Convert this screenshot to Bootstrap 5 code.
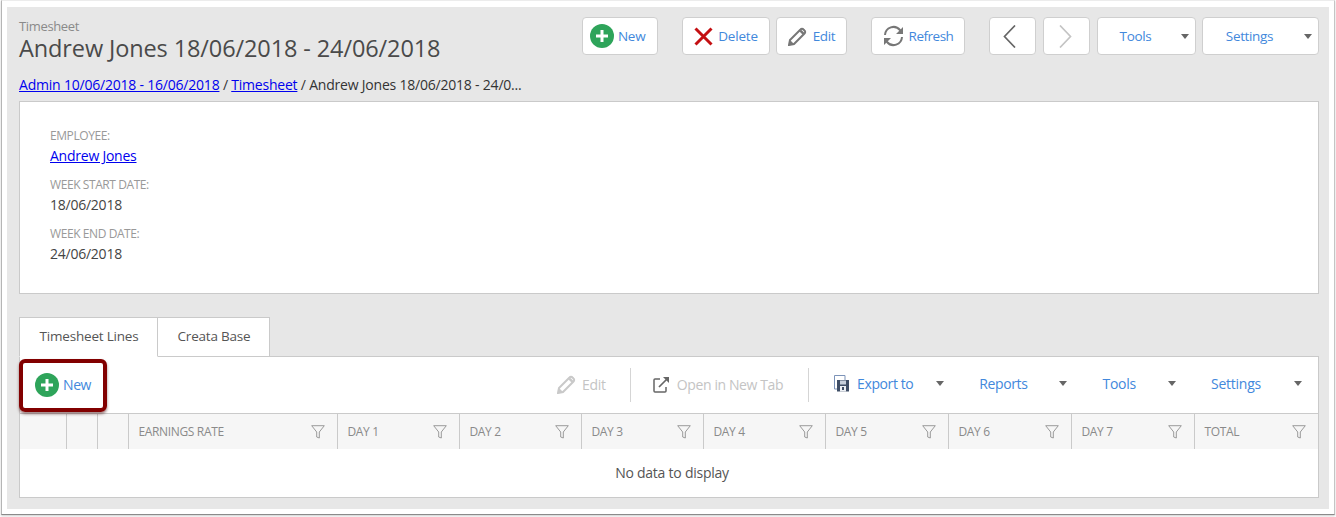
<!DOCTYPE html>
<html lang="en">
<head>
<meta charset="utf-8">
<title>Timesheet</title>
<link href="https://cdn.jsdelivr.net/npm/bootstrap@5.3.0/dist/css/bootstrap.min.css" rel="stylesheet">
<style>
html,body{height:517px;overflow:hidden;background:#fff;}
body{font-family:"Open Sans","Liberation Sans",sans-serif;font-size:14px;color:#444;letter-spacing:-.24px;}
.shot-frame{height:515px;margin:0 1px 0 1px;padding:6px 5px 5px 5px;border:1px solid #b5b5b5;border-top-color:#ececec;border-right-color:#c4c4c4;border-bottom-color:#8a8a8a;box-shadow:0 1px 2px rgba(0,0,0,.2);}
.panel-gray{background:#e7e7e7;height:502px;padding:10px 10px 0 12px;}
.head-row{height:59px;}
.crumb-type{font-size:13px;color:#8a8a8a;line-height:18px;letter-spacing:-.35px;}
.page-title{font-size:23.5px;font-weight:400;color:#4a4a4a;line-height:26px;margin:0;letter-spacing:-.11px;}
.tb-btn{height:38px;background:#fff;border:1px solid #cfcfcf;border-radius:4px;color:#4288dc;font-size:13.5px;padding:0;gap:6px;display:flex;align-items:center;justify-content:center;letter-spacing:-.35px;}
.tb-btn:hover{background:#fff;color:#4288dc;}
.w-new{width:76px;margin-right:24px;gap:4px;justify-content:flex-start;padding-left:7px;letter-spacing:-.3px;}
.w-del{width:88px;margin-right:6px;gap:5px;letter-spacing:-.2px;}
.w-edit{width:71px;margin-right:24px;}
.w-ref{width:94px;margin-right:24px;letter-spacing:-.5px;gap:5px;}
.w-nav{width:47px;margin-right:7px;}
.nav-prev{padding-right:7px;}
.nav-next{padding-right:3px;}
.w-tools{width:99px;margin-right:6px;}
.w-set{width:117px;}
.has-caret{position:relative;padding-right:22px;}
.caret-mark{width:0;height:0;border-left:4px solid transparent;border-right:4px solid transparent;border-top:5px solid #666;display:inline-block;}
.has-caret .caret-mark{position:absolute;right:6px;top:16px;}
.crumbs{line-height:18px;color:#333;height:25px;letter-spacing:-.21px;}
.crumbs a,.val-link{color:#0000ee;text-decoration:underline;}
.info-card{background:#fff;border:1px solid #cacaca;height:193px;padding:25px 30px;}
.fld-label{font-size:12px;color:#999;line-height:18px;text-transform:uppercase;letter-spacing:-.42px;}
.fld-value{line-height:20px;margin-top:1px;margin-bottom:10px;color:#444;}
.tab-strip{margin-top:23px;height:40px;position:relative;z-index:1;}
.tab-item{height:40px;background:#fff;border:1px solid #cacaca;color:#555;font-size:13.5px;letter-spacing:-.2px;padding:0 0 2px 1px;display:flex;align-items:center;justify-content:center;}
.tab-one{width:139px;border-bottom-color:#fff;}
.tab-two{width:112px;border-left:0;border-bottom-color:#cacaca;}
.grid-card{background:#fff;border:1px solid #cacaca;margin-top:-1px;height:142px;position:relative;}
.grid-bar{height:57px;border-bottom:1px solid #cacaca;padding:0 16px 1px 15px;position:relative;}
.bar-btn{color:#4288dc;display:flex;align-items:center;gap:4px;white-space:nowrap;}
.bar-btn.off{color:#c4c4c4;}
.bar-tight{letter-spacing:-.4px;}
.bar-drop{position:relative;top:-1px;}
.gap-six{gap:6px;}
.gap-seven{gap:7px;}
.bar-sep{width:1px;height:34px;background:#d5d5d5;}
.sep-a{margin:0 22px 0 24px;}
.sep-b{margin:0 25px;}
.bar-gap{margin-left:35px;}
.bar-gap .caret-mark{margin-left:28px;}
.bar-gap .caret-last{margin-left:29px;}
.export-caret{margin-left:16px;}
.grid-table{table-layout:fixed;width:100%;margin:0;border-collapse:collapse;}
.grid-table th{height:35px;background:#f6f6f6;border:0;border-left:1px solid #cacaca;color:#8a8a8a;font-weight:400;font-size:12px;padding:0 0 0 10px;text-transform:uppercase;position:relative;vertical-align:middle;box-shadow:none;letter-spacing:-.35px;}
.grid-table th:first-child{border-left:0;}
.grid-table .filter-ic{position:absolute;right:12px;top:11px;}
.empty-msg{text-align:center;padding-left:6px;line-height:48px;color:#555;}
.mark-box{position:absolute;left:-1px;top:2px;width:88px;height:53px;border:4px solid #820000;border-radius:6px;box-shadow:0 2px 3px rgba(60,0,0,.5);pointer-events:none;}
</style>
</head>
<body>
<div class="shot-frame">
<div class="panel-gray">
  <div class="head-row d-flex justify-content-between">
    <div>
      <div class="crumb-type">Timesheet</div>
      <h1 class="page-title">Andrew Jones 18/06/2018 - 24/06/2018</h1>
    </div>
    <div class="d-flex align-items-start">
      <button class="btn tb-btn w-new"><svg width="24" height="24" viewBox="0 0 24 24"><circle cx="12" cy="12" r="12" fill="#2ea45a"/><path d="M12 6v12M6 12h12" stroke="#fff" stroke-width="3"/></svg><span>New</span></button>
      <button class="btn tb-btn w-del"><svg width="19" height="19" viewBox="0 0 19 19"><path d="M1.500 1.500l16 16M17.500 1.500l-16 16" stroke="#c40f12" stroke-width="3"/></svg><span>Delete</span></button>
      <button class="btn tb-btn w-edit"><svg width="19" height="19" viewBox="0 0 19 19"><path d="M1 18l1-5L12.500 2.500a2 2 0 0 1 3 0l1 1a2 2 0 0 1 0 3L6 17z" fill="none" stroke="#777" stroke-width="2"/><path d="M1 18l1-5 4 4z M11 4l4 4 1.500-2-3-3z" fill="#777"/></svg><span>Edit</span></button>
      <button class="btn tb-btn w-ref"><svg width="21" height="22" viewBox="0 0 21 22"><path d="M2 10a8.500 8.500 0 0 1 15-5l1.500 2M19 12a8.500 8.500 0 0 1-15 5l-1.500-2" fill="none" stroke="#777" stroke-width="2"/><path d="M20 2v7h-7zM1 20v-7h7z" fill="#777"/></svg><span>Refresh</span></button>
      <button class="btn tb-btn w-nav nav-prev" aria-label="Previous"><svg width="13" height="23" viewBox="0 0 13 23"><path d="M12 .5L1.500 11.500 12 22.500" fill="none" stroke="#666" stroke-width="1.700"/></svg></button>
      <button class="btn tb-btn w-nav nav-next" aria-label="Next"><svg width="13" height="23" viewBox="0 0 13 23"><path d="M1 .5L11.500 11.500 1 22.500" fill="none" stroke="#c4c4c4" stroke-width="1.700"/></svg></button>
      <button class="btn tb-btn w-tools has-caret"><span>Tools</span><i class="caret-mark"></i></button>
      <button class="btn tb-btn w-set has-caret"><span>Settings</span><i class="caret-mark"></i></button>
    </div>
  </div>
  <div class="crumbs text-nowrap"><a href="#">Admin 10/06/2018 - 16/06/2018</a> / <a href="#">Timesheet</a> / Andrew Jones 18/06/2018 - 24/0...</div>
  <div class="info-card">
    <div class="fld-label">Employee:</div>
    <div class="fld-value"><a class="val-link" href="#">Andrew Jones</a></div>
    <div class="fld-label">Week Start Date:</div>
    <div class="fld-value">18/06/2018</div>
    <div class="fld-label">Week End Date:</div>
    <div class="fld-value">24/06/2018</div>
  </div>
  <div class="tab-strip d-flex">
    <div class="tab-item tab-one">Timesheet Lines</div>
    <div class="tab-item tab-two">Creata Base</div>
  </div>
  <div class="grid-card">
    <div class="grid-bar d-flex align-items-center">
      <div class="bar-btn bar-tight"><svg width="24" height="24" viewBox="0 0 24 24"><circle cx="12" cy="12" r="12" fill="#2ea45a"/><path d="M12 6v12M6 12h12" stroke="#fff" stroke-width="3"/></svg><span>New</span></div>
      <div class="d-flex align-items-center ms-auto">
        <div class="bar-btn off gap-six"><svg width="19" height="19" viewBox="0 0 19 19"><path d="M1 18l1-5L12.500 2.500a2 2 0 0 1 3 0l1 1a2 2 0 0 1 0 3L6 17z" fill="none" stroke="#c9c9c9" stroke-width="2"/><path d="M1 18l1-5 4 4z M11 4l4 4 1.500-2-3-3z" fill="#c9c9c9"/></svg><span>Edit</span></div>
        <div class="bar-sep sep-a"></div>
        <div class="bar-btn off gap-seven bar-tight"><svg width="17" height="17" viewBox="0 0 17 17"><path d="M7 3H2a1 1 0 0 0-1 1v11a1 1 0 0 0 1 1h10a1 1 0 0 0 1-1v-4" fill="none" stroke="#666" stroke-width="1.500"/><path d="M6 11l8-8" stroke="#666" stroke-width="1.700"/><path d="M10 1h6v6z" fill="#666"/></svg><span>Open in New Tab</span></div>
        <div class="bar-sep sep-b"></div>
        <div class="bar-btn gap-seven bar-tight bar-drop"><svg width="16" height="17" viewBox="0 0 16 17"><path d="M.5.500h10.500v13.500H.5z" fill="#fff" stroke="#7c93b8"/><path d="M3 5h12v11.500H3z" fill="#3f4e66"/><path d="M6 5.500h6v4H6z" fill="#c8d0dc"/><path d="M6 11h6v5.500H6z" fill="#eef1f5"/><path d="M8 12h2v3H8z" fill="#3f4e66"/></svg><span>Export to</span><i class="caret-mark export-caret"></i></div>
        <div class="bar-btn bar-gap bar-tight bar-drop"><span>Reports</span><i class="caret-mark"></i></div>
        <div class="bar-btn bar-gap bar-drop"><span>Tools</span><i class="caret-mark"></i></div>
        <div class="bar-btn bar-gap bar-drop"><span>Settings</span><i class="caret-mark caret-last"></i></div>
      </div>
    </div>
    <table class="table grid-table">
      <colgroup><col style="width:46px"><col style="width:31px"><col style="width:31px"><col style="width:209px"><col style="width:122px"><col style="width:122px"><col style="width:122px"><col style="width:122px"><col style="width:123px"><col style="width:123px"><col style="width:123px"><col></colgroup>
      <thead><tr>
        <th></th><th></th><th></th>
        <th>Earnings Rate<svg class="filter-ic" width="14" height="14" viewBox="0 0 14 14"><path d="M.7.700h12.600L8.300 7v6l-2.600-1V7z" fill="none" stroke="#9a9a9a"/></svg></th>
        <th>Day 1<svg class="filter-ic" width="14" height="14" viewBox="0 0 14 14"><path d="M.7.700h12.600L8.300 7v6l-2.600-1V7z" fill="none" stroke="#9a9a9a"/></svg></th>
        <th>Day 2<svg class="filter-ic" width="14" height="14" viewBox="0 0 14 14"><path d="M.7.700h12.600L8.300 7v6l-2.600-1V7z" fill="none" stroke="#9a9a9a"/></svg></th>
        <th>Day 3<svg class="filter-ic" width="14" height="14" viewBox="0 0 14 14"><path d="M.7.700h12.600L8.300 7v6l-2.600-1V7z" fill="none" stroke="#9a9a9a"/></svg></th>
        <th>Day 4<svg class="filter-ic" width="14" height="14" viewBox="0 0 14 14"><path d="M.7.700h12.600L8.300 7v6l-2.600-1V7z" fill="none" stroke="#9a9a9a"/></svg></th>
        <th>Day 5<svg class="filter-ic" width="14" height="14" viewBox="0 0 14 14"><path d="M.7.700h12.600L8.300 7v6l-2.600-1V7z" fill="none" stroke="#9a9a9a"/></svg></th>
        <th>Day 6<svg class="filter-ic" width="14" height="14" viewBox="0 0 14 14"><path d="M.7.700h12.600L8.300 7v6l-2.600-1V7z" fill="none" stroke="#9a9a9a"/></svg></th>
        <th>Day 7<svg class="filter-ic" width="14" height="14" viewBox="0 0 14 14"><path d="M.7.700h12.600L8.300 7v6l-2.600-1V7z" fill="none" stroke="#9a9a9a"/></svg></th>
        <th>Total<svg class="filter-ic" width="14" height="14" viewBox="0 0 14 14"><path d="M.7.700h12.600L8.300 7v6l-2.600-1V7z" fill="none" stroke="#9a9a9a"/></svg></th>
      </tr></thead>
    </table>
    <div class="empty-msg">No data to display</div>
    <div class="mark-box"></div>
  </div>
</div>
</div>
<script src="https://cdn.jsdelivr.net/npm/bootstrap@5.3.0/dist/js/bootstrap.bundle.min.js"></script>
</body>
</html>
